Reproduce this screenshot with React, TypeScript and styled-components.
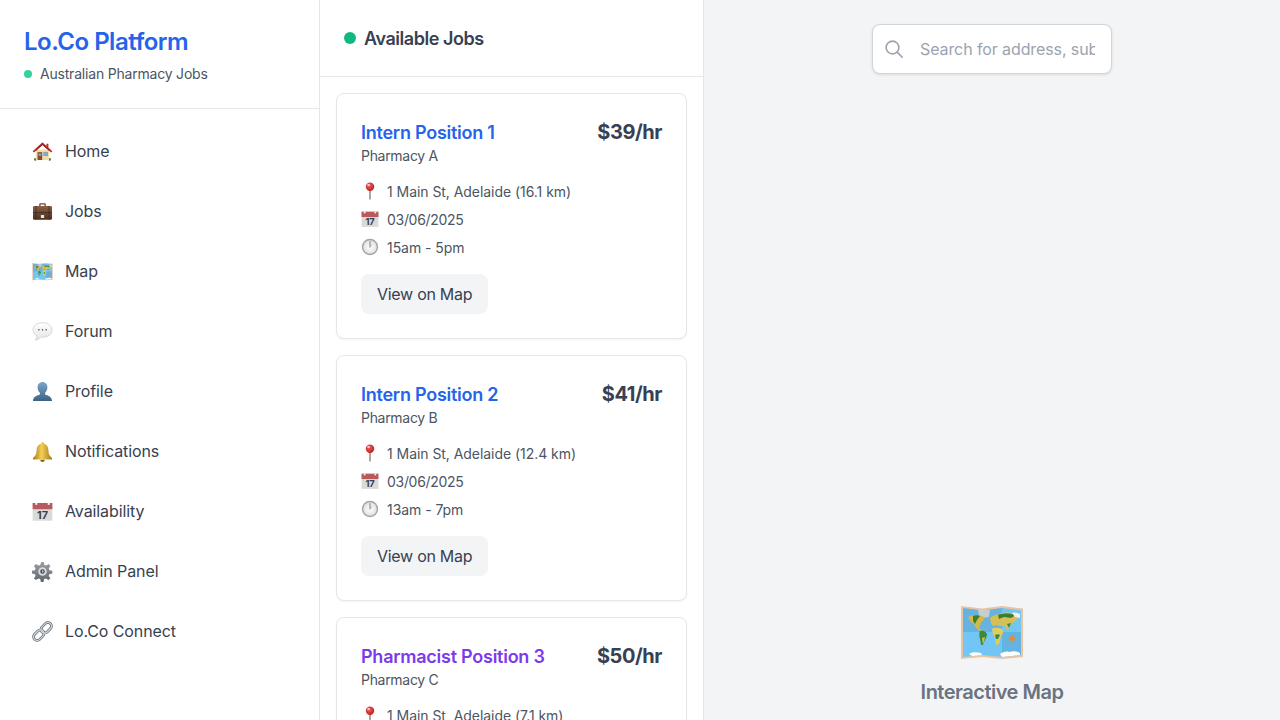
import React from "react";
import styled, { createGlobalStyle } from "styled-components";

const Global = createGlobalStyle`
  * { box-sizing: border-box; }
  html, body { margin: 0; padding: 0; height: 100%; overflow: hidden; }
  body {
    font-family: Inter, "Liberation Sans", sans-serif;
    background: #fff;
    -webkit-font-smoothing: antialiased;
  }
`;

const Shell = styled.div`
  display: flex;
  width: 1280px;
  height: 720px;
  overflow: hidden;
`;

const Sidebar = styled.aside`
  width: 320px;
  flex: none;
  background: #fff;
  border-right: 1px solid #e5e7eb;
`;

const Brand = styled.header`
  height: 109px;
  padding: 26px 24px 0;
  border-bottom: 1px solid #e5e7eb;
`;

const BrandTitle = styled.h1`
  margin: 0;
  font-size: 24px;
  line-height: 32px;
  font-weight: 600;
  letter-spacing: -0.5px;
  color: #2563eb;
`;

const BrandSub = styled.div`
  display: flex;
  align-items: center;
  gap: 8px;
  margin-top: 6px;
  font-size: 14px;
  line-height: 20px;
  letter-spacing: -0.2px;
  color: #4b5563;
`;

const StatusDot = styled.span<{ $size: number; $color: string }>`
  width: ${(p) => p.$size}px;
  height: ${(p) => p.$size}px;
  border-radius: 50%;
  background: ${(p) => p.$color};
  flex: none;
`;

const Nav = styled.nav`
  display: flex;
  flex-direction: column;
  gap: 8px;
  padding: 16px;
`;

const NavItem = styled.a`
  display: flex;
  align-items: center;
  gap: 12px;
  height: 52px;
  padding: 0 16px;
  font-size: 16px;
  font-weight: 400;
  letter-spacing: -0.1px;
  color: #374151;
`;

const Glyph = styled.svg<{ $size: number }>`
  display: block;
  flex: none;
  width: ${(p) => p.$size}px;
  height: ${(p) => p.$size}px;
`;

const JobsPanel = styled.section`
  width: 384px;
  flex: none;
  height: 720px;
  overflow: hidden;
  background: #fff;
  border-right: 1px solid #e5e7eb;
`;

const JobsHeader = styled.header`
  display: flex;
  align-items: center;
  gap: 8px;
  height: 77px;
  padding: 0 24px;
  border-bottom: 1px solid #e5e7eb;
  font-size: 18px;
  font-weight: 600;
  letter-spacing: -0.45px;
  color: #374151;
`;

const JobList = styled.div`
  display: flex;
  flex-direction: column;
  gap: 16px;
  padding: 16px;
`;

const Card = styled.article`
  border: 1px solid #e5e7eb;
  border-radius: 8px;
  padding: 24px;
  background: #fff;
  box-shadow: 0 1px 2px rgba(0, 0, 0, 0.05);
`;

const CardTop = styled.div`
  display: flex;
  justify-content: space-between;
  align-items: flex-start;
`;

const JobTitle = styled.h3<{ $color: string }>`
  margin: 0;
  padding-top: 1px;
  font-size: 18px;
  line-height: 27px;
  font-weight: 600;
  letter-spacing: -0.25px;
  color: ${(p) => p.$color};
`;

const Company = styled.div`
  font-size: 14px;
  line-height: 20px;
  letter-spacing: -0.3px;
  color: #4b5563;
`;

const Rate = styled.div`
  font-size: 20px;
  line-height: 28px;
  font-weight: 700;
  letter-spacing: -0.45px;
  color: #374151;
`;

const Details = styled.div`
  display: flex;
  flex-direction: column;
  gap: 8px;
  margin-top: 16px;
`;

const DetailRow = styled.div<{ $spacing?: number }>`
  display: flex;
  align-items: center;
  gap: 8px;
  height: 20px;
  font-size: 14px;
  line-height: 20px;
  letter-spacing: ${(p) => p.$spacing ?? -0.05}px;
  color: #4b5563;
  svg { margin-top: -2px; }
`;

const MapButton = styled.button`
  display: block;
  margin-top: 16px;
  height: 40px;
  padding: 0 16px;
  border: 0;
  border-radius: 8px;
  background: #f3f4f6;
  font-family: inherit;
  font-size: 16px;
  font-weight: 400;
  letter-spacing: -0.28px;
  color: #374151;
`;

const MapPanel = styled.main`
  position: relative;
  flex: 1;
  height: 720px;
  overflow: hidden;
  background: #f3f4f6;
`;

const SearchBox = styled.div`
  position: absolute;
  top: 24px;
  left: 50%;
  transform: translateX(-50%);
  width: 240px;
  height: 50px;
  display: flex;
  align-items: center;
  padding: 0 16px 0 12px;
  background: #fff;
  border: 1px solid #d1d5db;
  border-radius: 8px;
  box-shadow: 0 1px 3px rgba(0, 0, 0, 0.1);
`;

const SearchIcon = styled.svg`
  display: block;
  flex: none;
  width: 18px;
  height: 18px;
`;

const SearchInput = styled.input`
  flex: 1;
  min-width: 0;
  margin-left: 17px;
  border: 0;
  outline: 0;
  padding: 0;
  background: transparent;
  font-family: inherit;
  font-size: 16px;
  letter-spacing: -0.1px;
  color: #374151;
  &::placeholder { color: #9ca3af; opacity: 1; }
`;

const Placeholder = styled.div`
  display: flex;
  flex-direction: column;
  align-items: center;
  padding-top: 600px;
`;

const PlaceholderTitle = styled.h2`
  margin: 14px 0 0;
  font-size: 20px;
  line-height: 28px;
  font-weight: 600;
  letter-spacing: -0.5px;
  color: #6b7280;
`;

const PlaceholderText = styled.p`
  margin: 9px 0 0;
  font-size: 16px;
  line-height: 24px;
  white-space: nowrap;
  color: #6b7280;
`;

type IconName = "home" | "jobs" | "map" | "forum" | "profile" | "bell" | "calendar" | "gear" | "link" | "pin" | "clock";

const shapes: Record<IconName, React.ReactNode> = {
  home: (
    <>
      <path d="M6 56a4 4 0 1 1 8 0 4 4 0 0 1-8 0zM50 56a4 4 0 1 1 8 0 4 4 0 0 1-8 0z" fill="#4a8a3a" />
      <rect x="12" y="26" width="40" height="32" fill="#f1dcae" />
      <path d="M32 4 2 31l4 4 26-23 26 23 4-4-12-11V8h-6v7z" fill="#b8322c" />
      <path d="M32 12 12 30v-4l20-18 20 18v4z" fill="#7d2420" />
      <rect x="17" y="34" width="14" height="24" fill="#8a4a2e" />
      <rect x="20" y="38" width="8" height="7" fill="#6fb6e6" />
      <rect x="36" y="34" width="12" height="11" fill="#6fb6e6" stroke="#a77c4e" strokeWidth="1.5" />
    </>
  ),
  jobs: (
    <>
      <path d="M22 16v-6a3 3 0 0 1 3-3h14a3 3 0 0 1 3 3v6h-4v-5H26v5z" fill="#6d4a35" />
      <rect x="3" y="15" width="58" height="42" rx="4" fill="url(#caseFill)" />
      <rect x="3" y="34" width="58" height="2" fill="#3c2518" />
      <rect x="27" y="43" width="10" height="9" rx="1" fill="#e9e4dc" />
      <rect x="10" y="15" width="4" height="42" fill="#3c2518" opacity="0.5" />
      <rect x="50" y="15" width="4" height="42" fill="#3c2518" opacity="0.5" />
    </>
  ),
  map: (
    <>
      <path d="M1 6 22 8.5 42 6 63 8.5V57L42 59 22 57 1 59Z" fill="#e8c4a2" />
      <path d="M3 8 22 10.5 42 8 61 10.5V55L42 57 22 55 3 57Z" fill="#72c6f6" />
      <path d="M22 10.5 42 8V32H22zM42 32H61V55L42 57zM3 8 22 10.5V32H3z" fill="#1d4f78" opacity="0.16" />
      <path d="M18 10h12l-1 7-7 1-3-3z" fill="#c9cdd0" />
      <path d="M8 17c3-2 6-1 9-1 3-1 6 0 8 2l-4 5-2 5 4 3-3 0-4-3-2-4-3-2z" fill="#d2b94a" />
      <path d="M13 16c3-1 5-1 7 0l-3 4-2 4-2-3z" fill="#3c7d34" />
      <path d="M20 31c3-1 7 1 7 4-1 4-3 6-4 10l-2 0c0-5-3-9-1-14z" fill="#3c8a34" />
      <path d="M22 38l3-1-2 8z" fill="#d8bc4a" />
      <path d="M30 18c3-3 6-3 9-4 6-2 14-2 19 1l-1 5-5 3-3 5-2 2-2-4-5 0-4-1-3 1-2-3z" fill="#d6c055" />
      <path d="M38 15c5-2 12-2 18 0l-5 3-7-1-5 2z" fill="#3c7d34" />
      <path d="M47 24l4-1-2 5z" fill="#3c8a34" />
      <path d="M32 29c3-2 7-1 10 0 2 2 1 5-1 7l-2 8-3 1-1-7c-1-3-3-5-3-9z" fill="#dfcd60" />
      <path d="M35 35c2-1 4-1 5 0l-2 4-2 0z" fill="#3c8a34" />
      <path d="M49 37c2-1 5-1 6 1s-1 3-3 3-4-2-3-4z" fill="#e98b2a" />
      <path d="M9 54c3-2 7-2 12-1l1 2-10 1zM40 54c3-2 6-3 9-2 4-1 8-1 11 1v2L42 57z" fill="#fff" />
      <path d="M52 13c3-1 6 0 8 1v4l-5-1z" fill="#eef0f0" />
    </>
  ),
  forum: (
    <>
      <path d="M32 5C15 5 3 14 3 27c0 8 5 14 12 18 0 5-2 10-6 13 7 0 13-3 17-9 2 .3 4 .4 6 .4 17 0 29-9 29-22S49 5 32 5z" fill="url(#bubbleFill)" stroke="#c6c6c6" strokeWidth="2" />
      <circle cx="21" cy="27" r="2.5" fill="#555" />
      <circle cx="32" cy="27" r="2.5" fill="#555" />
      <circle cx="43" cy="27" r="2.5" fill="#555" />
    </>
  ),
  profile: (
    <path d="M32 3c9 0 15 7 15 16 0 7-3 13-7 17v5c9 3 21 7 21 20H3c0-13 12-17 21-20v-5c-4-4-7-10-7-17C17 10 23 3 32 3z" fill="url(#personFill)" />
  ),
  bell: (
    <>
      <path d="M32 3a5 5 0 0 1 5 5c9 3 13 11 13 21 0 12 4 17 11 23v4H3v-4c7-6 11-11 11-23 0-10 4-18 13-21a5 5 0 0 1 5-5z" fill="url(#bellFill)" />
      <path d="M25 57a7 7 0 0 0 14 0z" fill="#8a6310" />
    </>
  ),
  calendar: (
    <>
      <rect x="2" y="6" width="60" height="54" fill="#dadada" />
      <rect x="2" y="6" width="60" height="19" fill="#b9595c" />
      <circle cx="13" cy="9" r="3.5" fill="#f3f3f3" />
      <circle cx="51" cy="9" r="3.5" fill="#f3f3f3" />
      <text x="32" y="54" textAnchor="middle" fontFamily="Inter, sans-serif" fontWeight="700" fontSize="33" fill="#3a3f46">17</text>
    </>
  ),
  gear: (
    <>
      <path d="M28 3h8l2 9 5 2 8-5 5 6-5 8 2 5 9 2v8l-9 2-2 5 5 8-6 5-8-5-5 2-2 9h-8l-2-9-5-2-8 5-6-5 5-8-2-5-9-2v-8l9-2 2-5-5-8 6-6 8 5 5-2z" fill="url(#gearFill)" />
      <circle cx="32" cy="32" r="13" fill="#d8dadc" />
      <circle cx="32" cy="32" r="7" fill="#4c5157" />
      <path d="M31 28l5 4-5 4z" fill="#e8e8e8" />
    </>
  ),
  link: (
    <g fill="none" transform="rotate(-45 32 32)">
      <rect x="-2" y="21" width="36" height="22" rx="11" stroke="#5c666f" strokeWidth="8" />
      <rect x="30" y="21" width="36" height="22" rx="11" stroke="#5c666f" strokeWidth="8" />
      <rect x="-2" y="21" width="36" height="22" rx="11" stroke="#d3dade" strokeWidth="4" />
      <rect x="30" y="21" width="36" height="22" rx="11" stroke="#d3dade" strokeWidth="4" />
    </g>
  ),
  pin: (
    <>
      <rect x="29.5" y="26" width="5" height="36" rx="2" fill="#8a8177" />
      <circle cx="32" cy="17" r="15" fill="url(#pinFill)" />
      <ellipse cx="27" cy="11" rx="5" ry="3.5" fill="#fff" opacity="0.75" />
    </>
  ),
  clock: (
    <>
      <circle cx="32" cy="32" r="29" fill="#a2a2a2" />
      <circle cx="32" cy="32" r="24" fill="url(#clockFill)" />
      <path d="M32 13v19" stroke="#666" strokeWidth="3" strokeLinecap="round" />
      <path d="M32 32 38 24" stroke="#aaa" strokeWidth="2.5" strokeLinecap="round" />
    </>
  ),
};

const Gradients = () => (
  <defs>
    <linearGradient id="caseFill" x1="0" y1="0" x2="0" y2="1">
      <stop offset="0" stopColor="#8a6048" />
      <stop offset="1" stopColor="#4b2e1e" />
    </linearGradient>
    <linearGradient id="bubbleFill" x1="0" y1="0" x2="0" y2="1">
      <stop offset="0" stopColor="#ffffff" />
      <stop offset="1" stopColor="#e4e4e4" />
    </linearGradient>
    <linearGradient id="personFill" x1="0" y1="0" x2="0" y2="1">
      <stop offset="0" stopColor="#7ba6c8" />
      <stop offset="1" stopColor="#3c6287" />
    </linearGradient>
    <linearGradient id="bellFill" x1="0" y1="0" x2="1" y2="0">
      <stop offset="0" stopColor="#a87a14" />
      <stop offset="0.45" stopColor="#f2cf58" />
      <stop offset="1" stopColor="#a87a14" />
    </linearGradient>
    <linearGradient id="gearFill" x1="0" y1="0" x2="0" y2="1">
      <stop offset="0" stopColor="#9aa0a6" />
      <stop offset="1" stopColor="#5f656b" />
    </linearGradient>
    <radialGradient id="pinFill" cx="0.4" cy="0.35" r="0.7">
      <stop offset="0" stopColor="#f2625a" />
      <stop offset="1" stopColor="#b81a1e" />
    </radialGradient>
    <radialGradient id="clockFill" cx="0.5" cy="0.5" r="0.6">
      <stop offset="0" stopColor="#ffffff" />
      <stop offset="1" stopColor="#dcdcdc" />
    </radialGradient>
  </defs>
);

const Emoji = ({ name, size }: { name: IconName; size: number }) => (
  <Glyph $size={size} viewBox="0 0 64 64" aria-hidden="true">
    <Gradients />
    {shapes[name]}
  </Glyph>
);

const navItems: [IconName, string][] = [
  ["home", "Home"],
  ["jobs", "Jobs"],
  ["map", "Map"],
  ["forum", "Forum"],
  ["profile", "Profile"],
  ["bell", "Notifications"],
  ["calendar", "Availability"],
  ["gear", "Admin Panel"],
  ["link", "Lo.Co Connect"],
];

const jobs = [
  { title: "Intern Position 1", color: "#2563eb", rate: "$39/hr", company: "Pharmacy A", km: "16.1", time: "15am - 5pm" },
  { title: "Intern Position 2", color: "#2563eb", rate: "$41/hr", company: "Pharmacy B", km: "12.4", time: "13am - 7pm" },
  { title: "Pharmacist Position 3", color: "#7c3aed", rate: "$50/hr", company: "Pharmacy C", km: "7.1", time: "9am - 5pm" },
];

export default function App() {
  return (
    <Shell>
      <Global />
      <Sidebar>
        <Brand>
          <BrandTitle>Lo.Co Platform</BrandTitle>
          <BrandSub>
            <StatusDot $size={8} $color="#34d399" />
            Australian Pharmacy Jobs
          </BrandSub>
        </Brand>
        <Nav>
          {navItems.map(([icon, label]) => (
            <NavItem key={label}>
              <Emoji name={icon} size={21} />
              {label}
            </NavItem>
          ))}
        </Nav>
      </Sidebar>
      <JobsPanel>
        <JobsHeader>
          <StatusDot $size={12} $color="#10b981" />
          Available Jobs
        </JobsHeader>
        <JobList>
          {jobs.map((j) => (
            <Card key={j.title}>
              <CardTop>
                <div>
                  <JobTitle $color={j.color}>{j.title}</JobTitle>
                  <Company>{j.company}</Company>
                </div>
                <Rate>{j.rate}</Rate>
              </CardTop>
              <Details>
                <DetailRow>
                  <Emoji name="pin" size={18} />1 Main St, Adelaide ({j.km} km)
                </DetailRow>
                <DetailRow $spacing={-0.3}>
                  <Emoji name="calendar" size={18} />03/06/2025
                </DetailRow>
                <DetailRow>
                  <Emoji name="clock" size={18} />
                  {j.time}
                </DetailRow>
              </Details>
              <MapButton>View on Map</MapButton>
            </Card>
          ))}
        </JobList>
      </JobsPanel>
      <MapPanel>
        <SearchBox>
          <SearchIcon viewBox="0 0 24 24" fill="none" stroke="#9ca3af" strokeWidth="2.2" strokeLinecap="round" strokeLinejoin="round">
            <circle cx="10" cy="10" r="8.5" />
            <path d="M23 23l-6.8-6.8" />
          </SearchIcon>
          <SearchInput placeholder="Search for address, suburb or postcode" />
        </SearchBox>
        <Placeholder>
          <Emoji name="map" size={64} />
          <PlaceholderTitle>Interactive Map</PlaceholderTitle>
          <PlaceholderText>Find jobs on the map here soon</PlaceholderText>
        </Placeholder>
      </MapPanel>
    </Shell>
  );
}
